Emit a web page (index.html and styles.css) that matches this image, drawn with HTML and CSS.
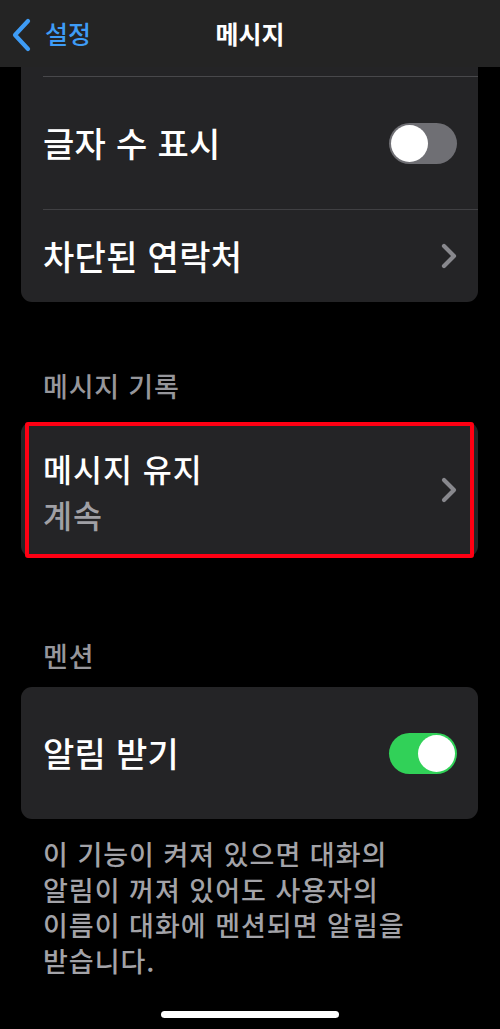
FILE: index.html
```html
<!DOCTYPE html>
<html lang="ko">
<head>
    <meta charset="UTF-8">
    <meta name="viewport" content="width=device-width, initial-scale=1.0">
    <title>메시지</title>
    <link rel="stylesheet" href="styles.css">
</head>
<body>

    <header class="nav">
        <a class="nav-back" href="#">
            <svg class="back-icon" width="22" height="34" viewBox="0 0 22 34">
                <polyline points="17,3 4,17 17,31" fill="none" stroke="#3e9cf6" stroke-width="4.2" stroke-linecap="round" stroke-linejoin="round"/>
            </svg>
            <span>설정</span>
        </a>
        <h1 class="nav-title">메시지</h1>
    </header>

    <main class="content">
        <section class="card card-cut">
            <div class="row row-tall">
                <span class="row-label">글자 수 표시</span>
                <span class="switch"><span class="knob"></span></span>
            </div>
            <div class="row row-short">
                <span class="row-label">차단된 연락처</span>
                <svg class="chevron" width="18" height="28" viewBox="0 0 18 28">
                    <polyline points="4,4 14,14 4,24" fill="none" stroke="#88888d" stroke-width="4.2" stroke-linecap="round" stroke-linejoin="round"/>
                </svg>
            </div>
        </section>

        <h2 class="section-title first">메시지 기록</h2>
        <section class="card card-marked">
            <div class="row row-double">
                <div class="row-text">
                    <span class="row-label">메시지 유지</span>
                    <span class="row-value">계속</span>
                </div>
                <svg class="chevron" width="18" height="28" viewBox="0 0 18 28">
                    <polyline points="4,4 14,14 4,24" fill="none" stroke="#88888d" stroke-width="4.2" stroke-linecap="round" stroke-linejoin="round"/>
                </svg>
            </div>
        </section>

        <h2 class="section-title second">멘션</h2>
        <section class="card">
            <div class="row row-single">
                <span class="row-label">알림 받기</span>
                <span class="switch on"><span class="knob"></span></span>
            </div>
        </section>
        <p class="footnote">이 기능이 켜져 있으면 대화의<br>알림이 꺼져 있어도 사용자의<br>이름이 대화에 멘션되면 알림을<br>받습니다.</p>
    </main>

    <div class="home-bar"></div>

</body>
</html>
```

FILE: styles.css
```css
body {
    margin: 0;
    background: #000;
    color: #fff;
    font-family: "Noto Sans CJK KR", "Noto Sans", sans-serif;
    width: 500px;
    height: 1029px;
    overflow: hidden;
    position: relative;
}

/* barre du haut */
.nav {
    height: 67px;
    background: #242424;
    display: flex;
    align-items: center;
    position: relative;
}

.nav-back {
    display: flex;
    align-items: center;
    color: #3e9cf6;
    text-decoration: none;
    font-size: 25px;
    font-weight: 500;
    padding-left: 11px;
    gap: 12px;
    line-height: 1;
}

.back-icon {
    margin-top: 3px;
}

.nav-title {
    position: absolute;
    left: 0;
    right: 0;
    margin: 0;
    text-align: center;
    font-size: 25px;
    font-weight: 700;
    line-height: 67px;
}

.content {
    padding: 0 22px 0 21px;
}

.card {
    background: #242426;
    border-radius: 11px;
    position: relative;
}

.card-cut {
    border-top-left-radius: 0;
    border-top-right-radius: 0;
    padding-top: 9px;
}

.row {
    display: flex;
    align-items: center;
    justify-content: space-between;
    margin-left: 22px;
    padding-right: 21px;
    box-sizing: border-box;
}

.row-tall {
    height: 133px;
    border-top: 1px solid #48484b;
}

.row-short {
    height: 93px;
    border-top: 1px solid #404043;
}

.row-double {
    height: 135px;
}

.row-single {
    height: 132px;
}

.row-label {
    font-size: 34px;
    font-weight: 500;
    line-height: 44px;
    letter-spacing: 0.3px;
}

.row-text {
    display: flex;
    flex-direction: column;
    padding-top: 2px;
}

.row-text .row-label,
.row-value {
    font-size: 31.5px;
    line-height: 46px;
    letter-spacing: 1px;
}

.row-value {
    font-weight: 500;
    color: #a0a0a5;
}

.chevron {
    margin-right: -1px;
}

.switch {
    width: 68px;
    height: 41px;
    border-radius: 21px;
    background: #6f6f74;
    display: flex;
    align-items: center;
    padding: 0 2px;
    box-sizing: border-box;
}

.switch.on {
    background: #31d158;
    justify-content: flex-end;
}

.knob {
    width: 37px;
    height: 37px;
    border-radius: 50%;
    background: #fff;
}

.section-title {
    margin: 0;
    padding-left: 22px;
    font-size: 27px;
    font-weight: 500;
    line-height: 32px;
    letter-spacing: 0.8px;
    color: #96969b;
}

.section-title.first {
    padding-top: 68px;
    padding-bottom: 20px;
}

.section-title.second {
    padding-top: 83px;
    padding-bottom: 15px;
}

/* cadre rouge de mise en evidence */
.card-marked::after {
    content: "";
    position: absolute;
    top: 0;
    left: 4px;
    right: 4px;
    bottom: -1px;
    border: 4px solid #ff0013;
    border-radius: 3px;
}

.footnote {
    margin: 0;
    padding: 17px 0 0 22px;
    font-size: 27px;
    font-weight: 500;
    line-height: 35.5px;
    letter-spacing: 1px;
    color: #a3a3a8;
}

.home-bar {
    position: absolute;
    left: 161px;
    top: 1011px;
    width: 178px;
    height: 7px;
    border-radius: 4px;
    background: #fff;
}
```
